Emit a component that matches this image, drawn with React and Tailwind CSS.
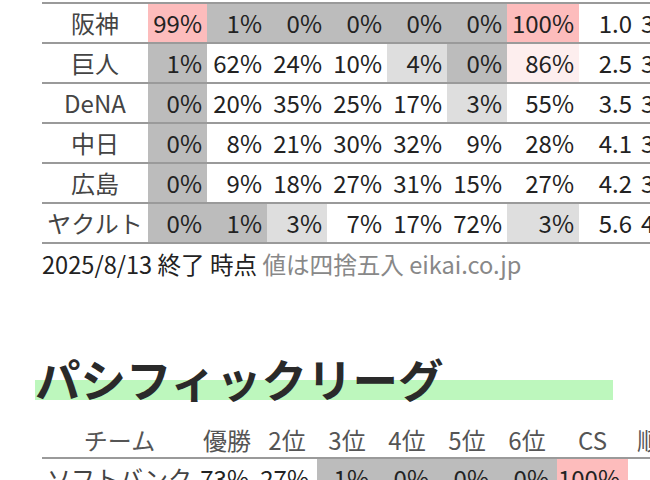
import React from "react";

const G = "bg-[#bcbcbc]";
const L = "bg-[#dedede]";
const P = "bg-[#fdbcbc]";
const VP = "bg-[#fdeeee]";

const central = [
  ["阪神", [["99%", P], ["1%", G], ["0%", G], ["0%", G], ["0%", G], ["0%", G], ["100%", P]], "1.0", "32"],
  ["巨人", [["1%", G], ["62%", ""], ["24%", ""], ["10%", ""], ["4%", L], ["0%", G], ["86%", VP]], "2.5", "33"],
  ["DeNA", [["0%", G], ["20%", ""], ["35%", ""], ["25%", ""], ["17%", ""], ["3%", L], ["55%", ""]], "3.5", "34"],
  ["中日", [["0%", G], ["8%", ""], ["21%", ""], ["30%", ""], ["32%", ""], ["9%", ""], ["28%", ""]], "4.1", "35"],
  ["広島", [["0%", G], ["9%", ""], ["18%", ""], ["27%", ""], ["31%", ""], ["15%", ""], ["27%", ""]], "4.2", "36"],
  ["ヤクルト", [["0%", G], ["1%", G], ["3%", L], ["7%", ""], ["17%", ""], ["72%", ""], ["3%", L]], "5.6", "41"],
];

const pacific = [
  ["ソフトバンク", [["73%", ""], ["27%", ""], ["1%", G], ["0%", G], ["0%", G], ["0%", G], ["100%", P]], "1.0", "33"],
];

export default function App() {
  return (
    <div className="w-[650px] h-[480px] overflow-hidden bg-white text-[#222] font-['Noto_Sans_CJK_JP',sans-serif]">
      <div className="pt-[2px] pl-[42px]">
        <table className="border-collapse table-fixed w-[668px] border-t-2 border-[#9a9a9a] text-[24px]">
          <colgroup>
            <col className="w-[106px]" />
            <col className="w-[59px]" />
            <col className="w-[60px]" />
            <col className="w-[60px]" />
            <col className="w-[60px]" />
            <col className="w-[60px]" />
            <col className="w-[60px]" />
            <col className="w-[72px]" />
            <col className="w-[58px]" />
            <col className="w-[73px]" />
          </colgroup>
          <tbody>
            {central.map(([team, cells, gb, rest]) => (
              <tr key={team} className="h-[40px] border-b-2 border-[#9a9a9a]">
                <td className="text-center text-[#444] leading-none p-0 whitespace-nowrap">{team}</td>
                {cells.map(([v, c], i) => (
                  <td key={i} className={`text-right pr-[5px] leading-none p-0 ${c}`}>{v}</td>
                ))}
                <td className="text-right pr-[5px] leading-none p-0">{gb}</td>
                <td className="text-left pl-[4px] leading-none p-0">{rest}</td>
              </tr>
            ))}
          </tbody>
        </table>
        <div className="mt-[4px] text-[23.6px] leading-[32px] whitespace-nowrap">
          <span className="text-[#222]">2025/8/13 終了 時点</span>{" "}
          <span className="text-[#888]">値は四捨五入 eikai.co.jp</span>
        </div>
      </div>

      <div className="mt-[70px] pl-[35px]">
        <h2 className="w-[578px] h-[56px] leading-[56px] text-[45.5px] font-bold text-[#2a2a2a] whitespace-nowrap bg-[linear-gradient(transparent_54%,#bdf7bd_54%,#bdf7bd_90%,transparent_90%)]">
          パシフィックリーグ
        </h2>
      </div>

      <div className="mt-[16px] pl-[42px]">
        <table className="border-collapse table-fixed w-[652px] text-[24px]">
          <colgroup>
            <col className="w-[155px]" />
            <col className="w-[60px]" />
            <col className="w-[60px]" />
            <col className="w-[60px]" />
            <col className="w-[60px]" />
            <col className="w-[60px]" />
            <col className="w-[60px]" />
            <col className="w-[71px]" />
            <col className="w-[66px]" />
          </colgroup>
          <thead>
            <tr className="h-[36px] border-b-2 border-[#9a9a9a] text-[#555] font-normal">
              {["チーム", "優勝", "2位", "3位", "4位", "5位", "6位", "CS", "順位"].map((h) => (
                <th key={h} className="font-normal text-center leading-none p-0 whitespace-nowrap">{h}</th>
              ))}
            </tr>
          </thead>
          <tbody>
            {pacific.map(([team, cells, gb]) => (
              <tr key={team} className="h-[40px] border-b-2 border-[#9a9a9a]">
                <td className="text-center text-[#444] leading-none p-0 whitespace-nowrap">{team}</td>
                {cells.map(([v, c], i) => (
                  <td key={i} className={`text-right pr-[8px] leading-none p-0 ${c}`}>{v}</td>
                ))}
                <td className="text-right pr-[5px] leading-none p-0">{gb}</td>
              </tr>
            ))}
          </tbody>
        </table>
      </div>
    </div>
  );
}
